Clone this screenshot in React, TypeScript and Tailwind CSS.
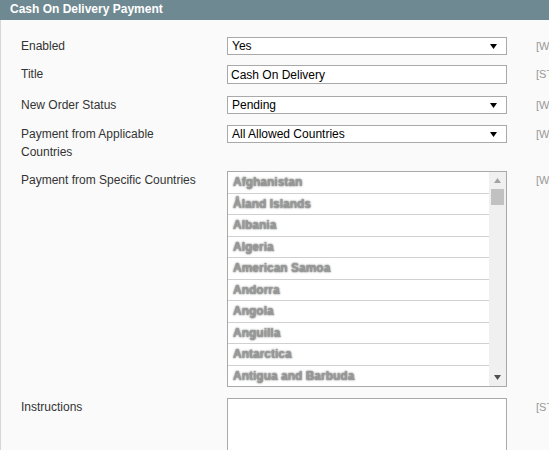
import React from "react";

const countries = [
  "Afghanistan",
  "Åland Islands",
  "Albania",
  "Algeria",
  "American Samoa",
  "Andorra",
  "Angola",
  "Anguilla",
  "Antarctica",
  "Antigua and Barbuda",
];

function Arrow({ color = "#000", down = true }: { color?: string; down?: boolean }) {
  return (
    <svg width="7" height="5" viewBox="0 0 7 5">
      <path d={down ? "M0 0H7L3.5 5Z" : "M0 5H7L3.5 0Z"} fill={color} />
    </svg>
  );
}

function Select({ value }: { value: string }) {
  return (
    <div className="flex h-[18px] w-[280px] items-center justify-between border border-[#a9a9a9] bg-white pl-[4px] pr-[9px]">
      <span className="leading-none">{value}</span>
      <Arrow />
    </div>
  );
}

function Row({
  label,
  scope,
  children,
  className = "",
}: {
  label: string;
  scope: string;
  children: React.ReactNode;
  className?: string;
}) {
  return (
    <div className={`flex items-start ${className}`}>
      <div className="w-[226px] shrink-0 pl-[20px] pr-[21px] leading-[18px] text-[#333]">{label}</div>
      <div className="w-[309px] shrink-0">{children}</div>
      <div className="whitespace-nowrap pt-[2px] text-[11px] leading-[14px] text-[#999]">{scope}</div>
    </div>
  );
}

export default function App() {
  return (
    <div className="h-[450px] w-[549px] overflow-hidden bg-[#fafafa] font-['Liberation_Sans',Arial,sans-serif] text-[12px] text-black">
      <div className="flex h-[20px] items-start bg-[#6f8992] pl-[10px] pt-[2px] text-[12px] font-bold leading-[14px] text-white">
        Cash On Delivery Payment
      </div>
      <div className="h-[430px] border-l border-[#d6d6d6] pt-[17px]">
        <Row label="Enabled" scope="[WEBSITE]">
          <Select value="Yes" />
        </Row>
        <Row label="Title" scope="[STORE VIEW]" className="mt-[10px]">
          <div className="flex h-[19px] w-[280px] items-center border border-[#a9a9a9] bg-white pl-[3px] leading-none">
            Cash On Delivery
          </div>
        </Row>
        <Row label="New Order Status" scope="[WEBSITE]" className="mt-[12px]">
          <Select value="Pending" />
        </Row>
        <Row label="Payment from Applicable Countries" scope="[WEBSITE]" className="mt-[11px]">
          <Select value="All Allowed Countries" />
        </Row>
        <Row label="Payment from Specific Countries" scope="[WEBSITE]" className="mt-[10px]">
          <div className="flex h-[216px] w-[280px] border border-[#a9a9a9] bg-white">
            <div className="flex-1">
              {countries.map((c, i) => (
                <div
                  key={c}
                  className={`flex h-[21.5px] items-center pl-[5px] font-bold text-[#9a9a9a] [text-shadow:0_0_2px_#444] ${
                    i < countries.length - 1 ? "border-b border-[#d0d0d0]" : ""
                  }`}
                >
                  {c}
                </div>
              ))}
            </div>
            <div className="flex w-[17px] flex-col items-center bg-[#f0f0f0]">
              <div className="flex h-[17px] items-center justify-center">
                <Arrow color="#a3a3a3" down={false} />
              </div>
              <div className="h-[16px] w-[13px] bg-[#c1c1c1]" />
              <div className="flex-1" />
              <div className="flex h-[17px] items-center justify-center">
                <Arrow color="#505050" />
              </div>
            </div>
          </div>
        </Row>
        <Row label="Instructions" scope="[STORE VIEW]" className="mt-[11px]">
          <div className="h-[80px] w-[280px] border border-[#a9a9a9] bg-white" />
        </Row>
      </div>
    </div>
  );
}
